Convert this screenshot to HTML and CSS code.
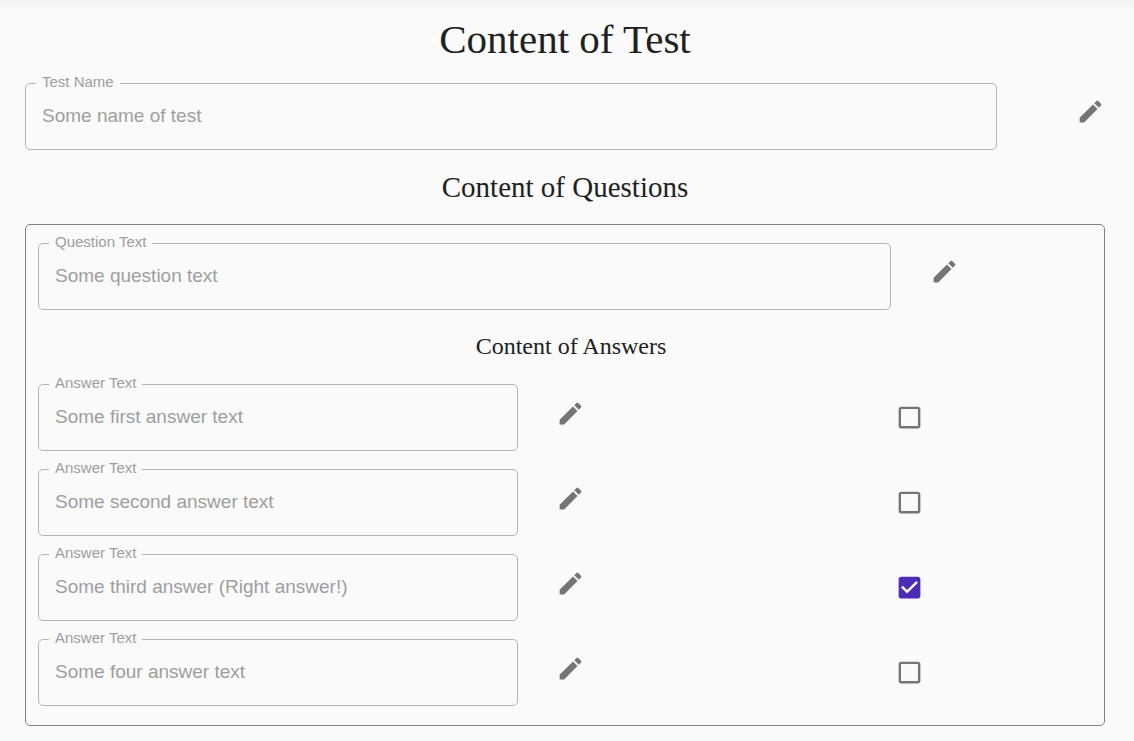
FILE: index.html
```html
<!DOCTYPE html>
<html lang="en">
<head>
<meta charset="utf-8">
<title>Content of Test</title>
<link rel="stylesheet" href="styles.css">
</head>
<body>
<svg class="sprite" aria-hidden="true">
  <symbol id="pencil" viewBox="0 0 24 24"><path d="M3 17.25V21h3.75L17.81 9.94l-3.75-3.75L3 17.25zM20.71 7.04c.39-.39.39-1.02 0-1.41l-2.34-2.34a.9959.9959 0 0 0-1.41 0l-1.83 1.83 3.75 3.75 1.83-1.83z"/></symbol>
  <symbol id="box" viewBox="0 0 24 24"><path d="M19 5v14H5V5h14m0-2H5c-1.1 0-2 .9-2 2v14c0 1.1.9 2 2 2h14c1.1 0 2-.9 2-2V5c0-1.1-.9-2-2-2z"/></symbol>
  <symbol id="box-checked" viewBox="0 0 24 24"><path d="M19 3H5c-1.11 0-2 .9-2 2v14c0 1.1.89 2 2 2h14c1.11 0 2-.9 2-2V5c0-1.1-.89-2-2-2zm-9 14l-5-5 1.41-1.41L10 14.17l7.59-7.59L19 8l-9 9z"/></symbol>
</svg>
<main class="page">
  <h1 class="title">Content of Test</h1>
  <div class="row row-test">
    <div class="field">
      <label class="field-label" for="test">Test Name</label>
      <input class="field-input" id="test" type="text" value="Some name of test" readonly>
    </div>
    <button class="edit" type="button" aria-label="Edit test name"><svg class="icon"><use href="#pencil"/></svg></button>
  </div>
  <h2 class="subtitle">Content of Questions</h2>
  <section class="question">
    <div class="row row-question">
      <div class="field">
        <label class="field-label" for="question">Question Text</label>
        <input class="field-input" id="question" type="text" value="Some question text" readonly>
      </div>
      <button class="edit" type="button" aria-label="Edit question"><svg class="icon"><use href="#pencil"/></svg></button>
    </div>
    <h3 class="answers-title">Content of Answers</h3>
    <div class="answers">
      <div class="row row-answer">
        <div class="field">
          <label class="field-label" for="answer1">Answer Text</label>
          <input class="field-input" id="answer1" type="text" value="Some first answer text" readonly>
        </div>
        <button class="edit" type="button" aria-label="Edit first answer"><svg class="icon"><use href="#pencil"/></svg></button>
        <div class="check-cell"><label class="check"><input class="check-input" type="checkbox" aria-label="First answer is right"><svg class="icon off"><use href="#box"/></svg><svg class="icon on"><use href="#box-checked"/></svg></label></div>
      </div>
      <div class="row row-answer">
        <div class="field">
          <label class="field-label" for="answer2">Answer Text</label>
          <input class="field-input" id="answer2" type="text" value="Some second answer text" readonly>
        </div>
        <button class="edit" type="button" aria-label="Edit second answer"><svg class="icon"><use href="#pencil"/></svg></button>
        <div class="check-cell"><label class="check"><input class="check-input" type="checkbox" aria-label="Second answer is right"><svg class="icon off"><use href="#box"/></svg><svg class="icon on"><use href="#box-checked"/></svg></label></div>
      </div>
      <div class="row row-answer">
        <div class="field">
          <label class="field-label" for="answer3">Answer Text</label>
          <input class="field-input" id="answer3" type="text" value="Some third answer (Right answer!)" readonly>
        </div>
        <button class="edit" type="button" aria-label="Edit third answer"><svg class="icon"><use href="#pencil"/></svg></button>
        <div class="check-cell"><label class="check"><input class="check-input" type="checkbox" aria-label="Third answer is right" checked><svg class="icon off"><use href="#box"/></svg><svg class="icon on"><use href="#box-checked"/></svg></label></div>
      </div>
      <div class="row row-answer">
        <div class="field">
          <label class="field-label" for="answer4">Answer Text</label>
          <input class="field-input" id="answer4" type="text" value="Some four answer text" readonly>
        </div>
        <button class="edit" type="button" aria-label="Edit fourth answer"><svg class="icon"><use href="#pencil"/></svg></button>
        <div class="check-cell"><label class="check"><input class="check-input" type="checkbox" aria-label="Fourth answer is right"><svg class="icon off"><use href="#box"/></svg><svg class="icon on"><use href="#box-checked"/></svg></label></div>
      </div>
    </div>
  </section>
</main>
</body>
</html>
```
FILE: styles.css
```css
* { box-sizing: border-box; }

body {
  margin: 0;
  background: linear-gradient(#f2f2f2, #fafafa 10px) no-repeat #fafafa;
  color: #212121;
  font-family: "Liberation Sans", Arial, sans-serif;
}

.sprite { display: none; }

.page { padding: 15px 29px 15px 25px; }

.title, .subtitle, .answers-title {
  margin: 0;
  font-family: "Liberation Serif", "Times New Roman", serif;
  font-weight: 400;
  text-align: center;
}

.title { font-size: 41px; line-height: 48px; margin-bottom: 20px; }
.subtitle { font-size: 29px; line-height: 38px; margin: 18px 0; }
.answers-title { font-size: 24px; line-height: 38px; margin: 17px 0 19px; }

.row { display: grid; align-items: center; }
.row-test { grid-template-columns: 90% 1fr; }
.row-question { grid-template-columns: 80% 10% 1fr; }
.row-answer { grid-template-columns: 45% 10% 1fr; }

.field {
  position: relative;
  border: 1px solid #b5b5b5;
  border-radius: 5px;
}

.field-label {
  position: absolute;
  top: -11px;
  left: 10px;
  padding: 0 6px;
  background: #fafafa;
  color: #9e9e9e;
  font-size: 15px;
  line-height: 18px;
}

.field-input {
  display: block;
  width: 100%;
  padding: 21px 16px 22px;
  border: 0;
  outline: 0;
  background: transparent;
  color: #9e9e9e;
  font: 19px/22px "Liberation Sans", Arial, sans-serif;
}

.edit {
  justify-self: center;
  padding: 0 0 10px;
  border: 0;
  background: none;
  cursor: pointer;
}

.row-test .edit { justify-self: end; }
.row-answer .edit { padding-bottom: 8px; }

.icon { display: block; width: 29px; height: 29px; fill: #757575; }

.question {
  padding: 18px 0 19px 12px;
  border: 1px solid #808080;
  border-radius: 5px;
}

.answers { display: grid; gap: 18px; }

.check-cell { display: flex; justify-content: center; padding-left: 19%; }
.check { position: relative; cursor: pointer; }
.check-input { position: absolute; inset: 0; width: 100%; height: 100%; margin: 0; opacity: 0; }
.on { display: none; fill: #4c2cb5; }
.check-input:checked ~ .on { display: block; }
.check-input:checked ~ .off { display: none; }
```
